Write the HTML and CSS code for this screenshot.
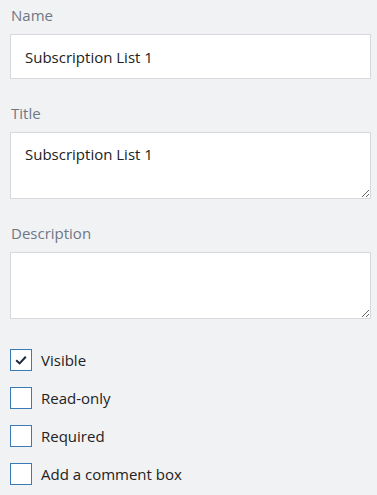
FILE: index.html
```html
<!DOCTYPE html>
<html>
<head>
    <meta charset='utf-8'>
    <title>Properties</title>
    <meta name='viewport' content='width=device-width, initial-scale=1'>
    <link rel="stylesheet" href="styles.css">
</head>
<body>
    <div class="panel">
        <div class="field">
            <label class="rotulo" for="nome">Name</label>
            <input type="text" id="nome" class="caixa" value="Subscription List 1">
        </div>
        <div class="field">
            <label class="rotulo" for="titulo">Title</label>
            <textarea id="titulo" class="caixa area">Subscription List 1</textarea>
        </div>
        <div class="field">
            <label class="rotulo" for="descricao">Description</label>
            <textarea id="descricao" class="caixa area"></textarea>
        </div>
        <div class="opcoes">
            <label class="opcao">
                <span class="check marcado">
                    <svg width="14" height="14" viewBox="0 0 14 14"><path d="M2.2 7.2 L5.6 10.4 L11.8 3.8" fill="none" stroke="#1b2842" stroke-width="2"/></svg>
                </span>
                Visible
            </label>
            <label class="opcao"><span class="check"></span>Read-only</label>
            <label class="opcao"><span class="check"></span>Required</label>
            <label class="opcao"><span class="check"></span>Add a comment box</label>
        </div>
    </div>
</body>
</html>
```
FILE: styles.css
```css
body {
    margin: 0;
    background-color: #f1f2f4;
    font-family: "Open Sans", "Noto Sans", sans-serif;
}
.panel {
    padding: 5px 6px 0 10px;
}
.field {
    margin-bottom: 24px;
}
.rotulo {
    display: block;
    color: #6d7884;
    font-size: 15px;
    line-height: 20px;
    margin: 0 0 9px 1px;
}
.caixa {
    display: block;
    box-sizing: border-box;
    width: 361px;
    height: 45px;
    margin: 0;
    padding: 0 14px;
    border: 1px solid #d6d8db;
    background-color: white;
    color: #222;
    font-family: inherit;
    font-size: 15px;
    outline: none;
}
.area {
    height: 67px;
    padding-top: 11px;
    resize: vertical;
}
.opcoes {
    display: flex;
    flex-direction: column;
    gap: 16px;
    padding-top: 6px;
}
.opcao {
    display: flex;
    align-items: center;
    gap: 9px;
    color: #222;
    font-size: 15px;
    line-height: 22px;
}
.check {
    display: flex;
    justify-content: center;
    align-items: center;
    box-sizing: border-box;
    width: 22px;
    height: 22px;
    border: 1px solid #3b7ab8;
    background-color: white;
}
```
